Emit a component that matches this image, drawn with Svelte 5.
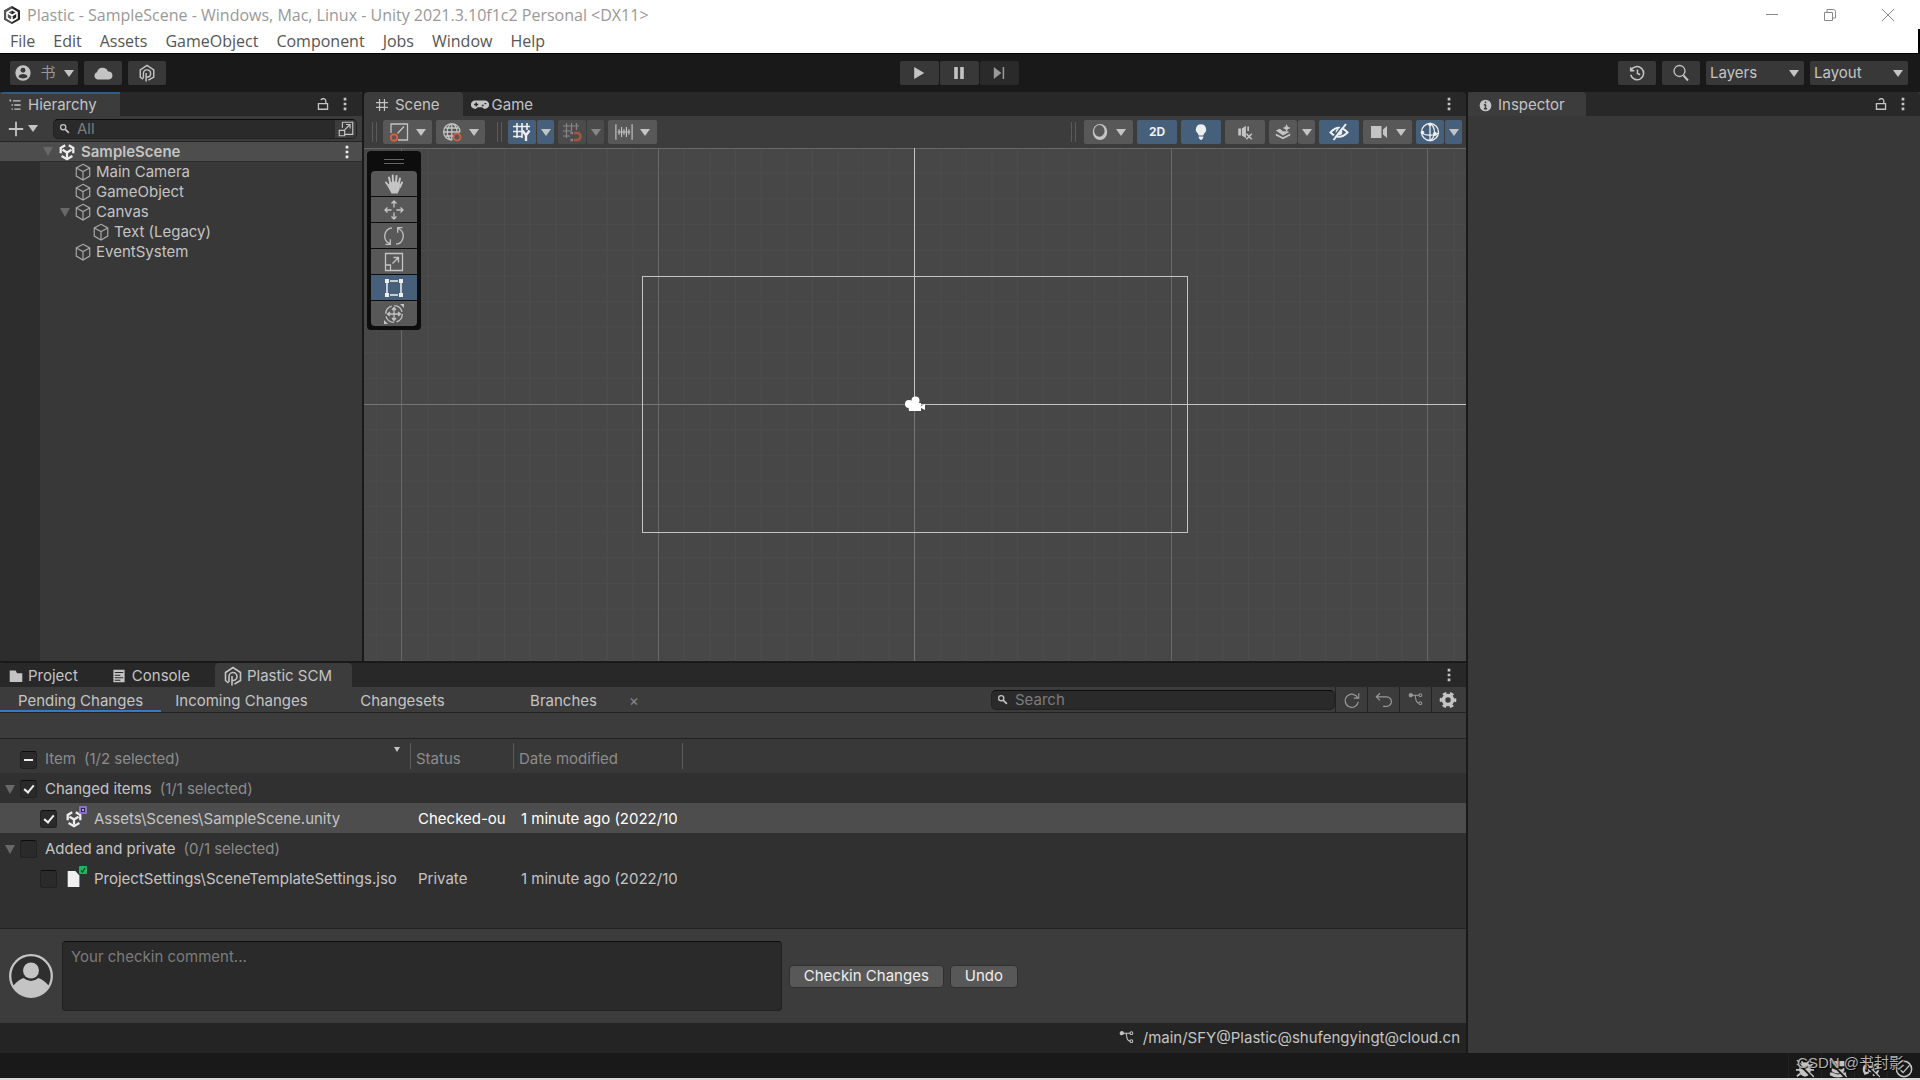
<script lang="ts">
  const menus = ["File", "Edit", "Assets", "GameObject", "Component", "Jobs", "Window", "Help"];

  const objects = [
    { name: "Main Camera", depth: 1, open: false },
    { name: "GameObject", depth: 1, open: false },
    { name: "Canvas", depth: 1, open: true },
    { name: "Text (Legacy)", depth: 2, open: false },
    { name: "EventSystem", depth: 1, open: false },
  ];

  const tools = ["hand", "move", "rotate", "scale", "rect", "transform"];
  let activeTool = $state("rect");

  const views = ["Pending Changes", "Incoming Changes", "Changesets", "Branches"];
  let activeView = $state("Pending Changes");

  let rows = $state([
    { kind: "group", name: "Changed items", count: "(1/1 selected)", checked: true },
    { kind: "file", icon: "unity", name: "Assets\\Scenes\\SampleScene.unity", status: "Checked-ou", date: "1 minute ago (2022/10", checked: true, selected: true },
    { kind: "group", name: "Added and private", count: "(0/1 selected)", checked: false },
    { kind: "file", icon: "doc", name: "ProjectSettings\\SceneTemplateSettings.jso", status: "Private", date: "1 minute ago (2022/10", checked: false, selected: false },
  ]);

  let filter = $state("");
  let search = $state("");
  let comment = $state("");
</script>

{#snippet icon(name, size = 20)}
  <svg class="icon" width={size} height={size} viewBox="0 0 20 20" fill="none" stroke="currentColor" stroke-width="1.3" aria-hidden="true">
    {#if name === "logo"}
      <path d="M10 1l8 4.500v9L10 19l-8-4.500v-9z" fill="#222" stroke="none" />
      <path d="M10 1L2 5.500v9l8 4.500z" fill="#555" stroke="none" />
      <path d="M10 4.500l5 3v5.500l-5 3-5-3V7.500zM5 7.500l5 3 5-3M10 10.500v5" stroke="#fff" stroke-width="1.600" />
    {:else if name === "unity"}
      <path d="M10 10.500L5 7.500M10 10.500l5-3M10 10.500v5.500M8 2.500L3 5.500v6M12 2.500l5 3v6M4 14.500l6 3.500 6-3.500" stroke-width="2.500" />
    {:else if name === "cube"}
      <path d="M10 1.500l7.500 4v9L10 19l-7.500-4.500v-9zM2.500 5.500l7.500 4 7.500-4M10 9.500V19" />
    {:else if name === "account"}
      <circle cx="10" cy="10" r="8.500" fill="currentColor" stroke="none" />
      <circle cx="10" cy="7" r="2.700" fill="#383838" stroke="none" />
      <path d="M5 14.500c0-4.500 10-4.500 10 0-2.500 2-7.500 2-10 0z" fill="#383838" stroke="none" />
    {:else if name === "cloud"}
      <path d="M4.500 16.500a3.800 3.800 0 0 1-.5-7.300A5.800 5.800 0 0 1 15 8.500a4 4 0 0 1 .8 8z" fill="currentColor" stroke="none" />
    {:else if name === "plastic"}
      <path d="M5.500 17L2.500 14.500V6.500L10 1.500l7.500 5v8L11.500 18" stroke-width="1.600" />
      <path d="M9 19.500V10M9 14.500h1.500a4 4 0 1 0-4.500-4v5.500" stroke-width="1.600" />
    {:else if name === "play"}
      <path d="M4 2.500l12.500 7.500L4 17.500z" fill="currentColor" stroke="none" />
    {:else if name === "pause"}
      <path d="M4 2.500h4.500v15H4zM11.500 2.500H16v15h-4.500z" fill="currentColor" stroke="none" />
    {:else if name === "step"}
      <path d="M3.500 2.500L13 10l-9.500 7.500z" fill="currentColor" stroke="none" />
      <path d="M15.500 2.500v15" stroke-width="1.900" />
    {:else if name === "history"}
      <path d="M3.500 7A7.300 7.300 0 1 1 3 12M3 3.500V7.500h4M10.500 6v4.500l3 1.500" stroke-width="1.700" />
    {:else if name === "search"}
      <circle cx="8.500" cy="8" r="5.500" />
      <path d="M12.500 12.500L17 17.500" stroke-width="1.900" />
    {:else if name === "find"}
      <circle cx="7" cy="7" r="4.300" stroke-width="2.200" />
      <path d="M10.500 10.500l6 6" stroke-width="2.800" />
    {:else if name === "list"}
      <path d="M2 3h2M7 4h11M9 10h9M9 16h9M3.500 3v2M5 10h2M5 16h2" stroke-width="1.900" />
    {:else if name === "lock"}
      <path d="M3.500 9.500h13v8h-13zM14 9.500V5.500a3 3 0 0 0-3-3h-1a3 3 0 0 0-3 2" stroke-width="1.900" />
    {:else if name === "dots"}
      <path d="M8.500 3h3v3h-3zM8.500 8.500h3v3h-3zM8.500 14h3v3h-3z" fill="currentColor" stroke="none" />
    {:else if name === "plus"}
      <path d="M10 2v16M2 10h16" stroke-width="2" />
    {:else if name === "popout"}
      <path d="M6 2.500h11.500v13.500H8.500M6 2.500v6M2.500 11.500h6v6h-6zM8.500 11l6-6M10 5h4.500v4.500" />
    {:else if name === "grid"}
      <path d="M6.500 1.500v17M13.500 1.500v17M1.500 6.500h17M1.500 13.500h17" stroke-width="1.700" />
    {:else if name === "gamepad"}
      <path d="M5 5h10a4.600 4.600 0 0 1 1 9.300c-2 .3-3-1.800-4-1.800H8c-1 0-2 2.100-4 1.800A4.600 4.600 0 0 1 5 5z" fill="currentColor" stroke="none" />
      <path d="M3.500 9.500h4.500M5.800 7.300v4.500M12 10.500h2M15 8.500h2" stroke="#282828" stroke-width="1.600" />
    {:else if name === "info"}
      <circle cx="10" cy="10" r="9" fill="currentColor" stroke="none" />
      <path d="M10 4v2.500M10 8.500v6M7.500 9H10M7.500 15h5" stroke="#3c3c3c" stroke-width="2.300" />
    {:else if name === "pivot"}
      <path d="M2 11V2h16.500v16H9M8.500 11.500l6.500-7" />
      <circle cx="5" cy="15.500" r="3.200" stroke="#e0603c" stroke-width="1.700" />
    {:else if name === "globe"}
      <path d="M10 18A8.200 8.200 0 1 1 18 10M9.800 1.500v17M1.500 10H18M3.500 6h13M3.500 14h8M9 2c-5 4-5 12 0 16M11 2c3 2 4 4 4 8" />
      <circle cx="15" cy="15" r="3.500" stroke="#e0603c" stroke-width="1.700" />
    {:else if name === "gridY"}
      <path d="M5 1v15M10 1v15M15 1v7M1 4.500h17M1 9.500h9M1 14.500h9" stroke-width="1.600" />
      <path d="M10.500 8.500l3.500 5 3.500-5M14 13v6" stroke-width="2.400" />
    {:else if name === "snap"}
      <path d="M4.500 1v15M9.500 1v8M14.500 1v7M1 4h16M1 9h8M1 14h7" stroke-width="1.200" />
      <path d="M12 11h3a3.300 3.300 0 0 1 0 7h-3" stroke="#ff6c3e" stroke-width="2.600" />
      <path d="M8.500 11h2.500M8.500 18h2.500" stroke-width="2.600" />
    {:else if name === "ruler"}
      <path d="M1 1.500v17M19 1.500v17M3 10h14M4.500 7v6M7.300 4.500v11M10 7v6M12.700 4.500v11M15.500 7v6" />
    {:else if name === "shading"}
      <ellipse cx="10" cy="10" rx="8" ry="9" fill="currentColor" stroke="none" />
      <ellipse cx="9.300" cy="8.800" rx="5.800" ry="6.500" fill="#585858" stroke="none" />
    {:else if name === "bulb"}
      <path d="M10 1.500a5.700 5.700 0 0 1 3.500 10.200L12.500 14h-5L6.500 11.700A5.700 5.700 0 0 1 10 1.500zM7.500 15h5v1.500l-1.500 2H9l-1.500-2z" fill="currentColor" stroke="none" />
    {:else if name === "mute"}
      <path d="M2.500 6h3v8h-3zM6.500 6L11 3v14l-4.500-3z" fill="currentColor" stroke="none" />
      <path d="M13.500 4v5M11.500 12l6 6M17.500 12l-6 6" stroke-width="1.800" />
    {:else if name === "layers"}
      <path d="M1 8l5-2 4 3h5l3 1-8 4.500zM1 12l9 4.500 9-4.500v2.500L10 19l-9-4.500z" fill="currentColor" stroke="none" />
      <path d="M14.500 0l1.500 3.500L19.500 5 16 6.500 14.500 10 13 6.500 9.500 5 13 3.500z" fill="currentColor" stroke="none" />
    {:else if name === "eye"}
      <path d="M1.500 10.500Q10 1 18.500 10.500Q10 19 1.500 10.500z" stroke-width="2" />
      <circle cx="10" cy="10" r="3.300" fill="currentColor" stroke="none" />
      <path d="M15.500 1L3 17" stroke="#46607c" stroke-width="1.500" />
      <path d="M17 2L4.500 18" stroke-width="2" />
    {:else if name === "video"}
      <path d="M2 4h10.500v12H2zM14 7.500L18 4v12l-4-3.500z" fill="currentColor" stroke="none" />
    {:else if name === "gizmo"}
      <circle cx="10" cy="10" r="8.500" />
      <path d="M10 1v18M10 1c6 5 6 13 0 18M1 11c6 3 12 3 18 0" />
      <circle cx="10" cy="2.500" r="1.800" fill="currentColor" stroke="none" />
      <circle cx="2.500" cy="10.500" r="1.800" fill="currentColor" stroke="none" />
      <circle cx="15" cy="12" r="2" fill="currentColor" stroke="none" />
    {:else if name === "hand"}
      <path d="M6.500 10L5 3.500M9 9L8.700 1.500M12 9l.5-7M14.500 10.500l1.500-6M5.500 13L2 8.500M16 13l2-4.500" stroke-width="2" stroke-linecap="round" />
      <path d="M5.500 9l3-1.500h4l3.500 2.500-.5 5.500-2 4H7.500L3.500 12z" fill="currentColor" stroke="none" />
    {:else if name === "move"}
      <path d="M10 1v6.500M10 12.500V19M1 10h6.500M12.500 10H19M7.500 3.500L10 1l2.500 2.500M7.500 16.500L10 19l2.500-2.500M3.500 7.500L1 10l2.500 2.500M16.500 7.500L19 10l-2.500 2.500" />
    {:else if name === "rotate"}
      <path d="M8 1.800A8.300 8.300 0 0 0 5.500 17.500M12 18.200A8.300 8.300 0 0 0 14.500 2.500M1.500 18.300h4.800v-5M18.500 1.700h-4.800v5" />
    {:else if name === "scale"}
      <path d="M1.500 1.500h17v17h-17zM1.500 13h5v5.500M8.500 11.500l6-6M9.500 5.500h5v5" />
    {:else if name === "rect"}
      <path d="M3 5v10M17 5v10M6 3h8M6 17h8" stroke-width="1.500" />
      <path d="M1 1h4v4H1zM15 1h4v4h-4zM1 15h4v4H1zM15 15h4v4h-4z" fill="currentColor" stroke="none" />
    {:else if name === "transform"}
      <circle cx="10" cy="10" r="8.300" stroke-dasharray="10.500 2.540" />
      <path d="M10 4v12M4 10h12M8 6l2-2.500L12 6M8 14l2 2.500 2-2.500M6 8l-2.500 2L6 12M14 8l2.500 2-2.500 2" />
      <path d="M16 0h4v4zM0 16v4h4z" fill="currentColor" stroke="none" />
    {:else if name === "folder"}
      <path d="M1 2h8.500l2 4H19v12.500H1z" fill="currentColor" stroke="none" />
    {:else if name === "console"}
      <path d="M2 1h16v18H2z" fill="currentColor" stroke="none" />
      <path d="M4 5h12M4 9h8M4 12.500h12M4 16h8" stroke="#282828" stroke-width="1.600" />
    {:else if name === "refresh"}
      <path d="M16.500 8A7.300 7.300 0 1 0 17 12M17.500 2.500V8H12" />
    {:else if name === "undo"}
      <path d="M2 6.500h11a5 5 0 0 1 0 10.500H9M5.500 2.500l-4 4 4 4" />
    {:else if name === "branch"}
      <path d="M4 4h10M9 4c1 7 1 9 5 10" />
      <circle cx="3.500" cy="4" r="2" fill="currentColor" />
      <circle cx="15.500" cy="4" r="1.700" />
      <circle cx="15.500" cy="14" r="1.700" />
    {:else if name === "gear"}
      <circle cx="10" cy="10" r="5" stroke-width="4" />
      <circle cx="10" cy="10" r="7.500" stroke-width="3.500" stroke-dasharray="4 3.854" stroke-dashoffset="2" />
    {:else if name === "doc"}
      <path d="M3 1h8.500l4.500 5v13H3z" fill="#f0f0f0" stroke="none" />
    {:else if name === "bug"}
      <ellipse cx="10" cy="10.500" rx="6.500" ry="8" fill="currentColor" stroke="none" />
      <path d="M1 4l4 3M19 4l-4 3M0 11h20M1 18l4-3M19 18l-4-3M6 1l2 4M14 1l-2 4" stroke-width="2" />
      <path d="M0 1l18 18" stroke="#191919" stroke-width="2.500" />
      <path d="M1 0l19 19" stroke-width="1.300" />
    {:else if name === "cache"}
      <path d="M3 1h14v6H3zM3 8.500q7 5 14 0v4q-7 5-14 0zM1 14h3q6 4 12 0h3v3q-9 5-18 0z" fill="currentColor" stroke="none" />
      <path d="M0 1l18 18" stroke="#191919" stroke-width="2.500" />
      <path d="M1 0l19 19" stroke-width="1.300" />
    {:else if name === "refreshOff"}
      <path d="M3 14A7.500 7.500 0 0 1 8 3M17 6a7.500 7.500 0 0 1-5 11M2 11l1.500 4 4-1.500M18 9l-1.500-4-4 1.500" stroke-width="2.400" />
      <circle cx="10" cy="10" r="3" fill="currentColor" />
      <path d="M0 1l18 18" stroke="#191919" stroke-width="2.500" />
      <path d="M1 0l19 19" stroke-width="1.300" />
    {:else if name === "progress"}
      <circle cx="10" cy="10" r="8.500" stroke-width="1.700" />
      <path d="M5 10l4 4 7-8M7 8l3-2" stroke-width="1.500" />
    {/if}
  </svg>
{/snippet}

{#snippet caret()}<span class="caret"></span>{/snippet}

<div class="editor">
  <header class="titlebar">
    {@render icon("logo", 20)}
    <h1>Plastic - SampleScene - Windows, Mac, Linux - Unity 2021.3.10f1c2 Personal &lt;DX11&gt;</h1>
    <div class="window-buttons">
      <button aria-label="Minimize"><svg width="14" height="14" viewBox="0 0 14 14"><path d="M1 6.500h12" /></svg></button>
      <button aria-label="Restore"><svg width="14" height="14" viewBox="0 0 14 14"><path d="M1.500 4.500h8v8h-8zM4 4V1.500h6.500a2 2 0 0 1 2 2V10H10" /></svg></button>
      <button aria-label="Close"><svg width="14" height="14" viewBox="0 0 14 14"><path d="M1 1l12 12M13 1L1 13" /></svg></button>
    </div>
  </header>

  <nav class="menubar">
    {#each menus as menu}
      <button>{menu}</button>
    {/each}
  </nav>

  <div class="toolbar">
    <div class="side">
      <button class="dark account" aria-label="Account">{@render icon("account", 18)}<span>书</span>{@render caret()}</button>
      <button class="dark" aria-label="Services">{@render icon("cloud", 20)}</button>
      <button class="dark" aria-label="Plastic">{@render icon("plastic", 18)}</button>
    </div>
    <div class="playback">
      <button class="dark" aria-label="Play">{@render icon("play", 16)}</button>
      <button class="dark" aria-label="Pause">{@render icon("pause", 16)}</button>
      <button class="dark off" aria-label="Step">{@render icon("step", 16)}</button>
    </div>
    <div class="side right">
      <button class="dark" aria-label="Undo history">{@render icon("history", 18)}</button>
      <button class="dark" aria-label="Search">{@render icon("search", 20)}</button>
      <label class="dropdown"><select aria-label="Layers"><option>Layers</option></select>{@render caret()}</label>
      <label class="dropdown"><select aria-label="Layout"><option>Layout</option></select>{@render caret()}</label>
    </div>
  </div>

  <main>
    <div class="left">
      <div class="top">
        <section class="hierarchy">
          <div class="tabs">
            <button class="tab active focused">{@render icon("list", 14)}Hierarchy</button>
            <div class="tab-actions">
              <button aria-label="Lock">{@render icon("lock", 14)}</button>
              <button aria-label="Menu">{@render icon("dots", 18)}</button>
            </div>
          </div>
          <div class="filter">
            <button class="add" aria-label="Create">{@render icon("plus", 18)}{@render caret()}</button>
            <div class="field">
              {@render icon("find", 12)}
              <input type="text" placeholder="All" aria-label="Filter objects" bind:value={filter} />
              <button class="open" aria-label="Open search">{@render icon("popout", 18)}</button>
            </div>
          </div>
          <div class="tree">
            <div class="scene-row">
              <span class="caret fold"></span>
              {@render icon("unity", 18)}
              <b>SampleScene</b>
              <button aria-label="Scene menu">{@render icon("dots", 18)}</button>
            </div>
            <ul>
              {#each objects as obj}
                <li class:nested={obj.depth === 2}>
                  <span class="caret fold" class:hidden={!obj.open}></span>
                  {@render icon("cube", 18)}{obj.name}
                </li>
              {/each}
            </ul>
          </div>
        </section>

        <section class="scene">
          <div class="tabs">
            <button class="tab active">{@render icon("grid", 14)}Scene</button>
            <button class="tab game">{@render icon("gamepad", 18)}Game</button>
            <div class="tab-actions">
              <button aria-label="Menu">{@render icon("dots", 18)}</button>
            </div>
          </div>
          <div class="scene-tools">
            <i class="grip"></i>
            <button class="tool wide" aria-label="Pivot">{@render icon("pivot", 20)}{@render caret()}</button>
            <button class="tool wide" aria-label="Global">{@render icon("globe", 20)}{@render caret()}</button>
            <i class="grip second"></i>
            <span class="split">
              <button class="tool on" aria-label="Grid">{@render icon("gridY", 20)}</button>
              <button class="tool arrow on" aria-label="Grid options">{@render caret()}</button>
            </span>
            <span class="split faded">
              <button class="tool" aria-label="Snap">{@render icon("snap", 20)}</button>
              <button class="tool arrow" aria-label="Snap options">{@render caret()}</button>
            </span>
            <button class="tool wide" aria-label="Increment">{@render icon("ruler", 18)}{@render caret()}</button>
            <i class="grip push"></i>
            <button class="tool wide" aria-label="Shading">{@render icon("shading", 18)}{@render caret()}</button>
            <button class="tool mid on">2D</button>
            <button class="tool mid on" aria-label="Lighting">{@render icon("bulb", 18)}</button>
            <button class="tool mid" aria-label="Audio">{@render icon("mute", 18)}</button>
            <span class="split">
              <button class="tool" aria-label="Effects">{@render icon("layers", 16)}</button>
              <button class="tool arrow" aria-label="Effect options">{@render caret()}</button>
            </span>
            <button class="tool mid on" aria-label="Visibility">{@render icon("eye", 20)}</button>
            <button class="tool wide" aria-label="Camera">{@render icon("video", 20)}{@render caret()}</button>
            <span class="split">
              <button class="tool on" aria-label="Gizmos">{@render icon("gizmo", 20)}</button>
              <button class="tool arrow on" aria-label="Gizmo options">{@render caret()}</button>
            </span>
          </div>
          <div class="viewport">
            <svg class="world" viewBox="0 0 1102 513" preserveAspectRatio="xMidYMid slice" aria-hidden="true">
              <defs>
                <pattern id="minor" x="550.500" y="255.500" width="25.650" height="25.650" patternUnits="userSpaceOnUse">
                  <path d="M0 0H26M0 0V26" stroke="#505050" fill="none" />
                </pattern>
              </defs>
              <rect width="1102" height="513" fill="url(#minor)" />
              <path d="M37.500 0v513M294.500 0v513M807.500 0v513M1063.500 0v513M0 .5h1102" stroke="#686868" />
              <path d="M550.500 256v257M0 256.500h550" stroke="#747474" />
              <path d="M550.500 0v256M550 256.500h552" stroke="#c4c4c4" />
              <rect x="278.500" y="128.500" width="545" height="256" fill="none" stroke="#c4c4c4" />
              <g fill="#fff">
                <circle cx="545" cy="256" r="4" />
                <circle cx="551.500" cy="252.500" r="4" />
                <path d="M544 255h13v3l4-2v6l-4-2v3h-12z" />
              </g>
            </svg>
            <div class="palette">
              <i></i>
              {#each tools as tool}
                <button class:on={activeTool === tool} aria-label={tool} onclick={() => (activeTool = tool)}>
                  {@render icon(tool, 20)}
                </button>
              {/each}
            </div>
          </div>
        </section>
      </div>

      <section class="plastic">
        <div class="tabs">
          <button class="tab project">{@render icon("folder", 14)}Project</button>
          <button class="tab console">{@render icon("console", 14)}Console</button>
          <button class="tab active scm">{@render icon("plastic", 20)}Plastic SCM</button>
          <div class="tab-actions">
            <button aria-label="Menu">{@render icon("dots", 18)}</button>
          </div>
        </div>
        <div class="views">
          {#each views as view}
            <button class="view" class:current={activeView === view} onclick={() => (activeView = view)}>
              {view}{#if view === "Branches"}<span class="close">×</span>{/if}
            </button>
          {/each}
          <div class="field search">
            {@render icon("find", 12)}
            <input type="text" placeholder="Search" aria-label="Search changes" bind:value={search} />
          </div>
          <button class="action" aria-label="Refresh">{@render icon("refresh", 18)}</button>
          <button class="action" aria-label="Undo changes">{@render icon("undo", 18)}</button>
          <button class="action" aria-label="Branch">{@render icon("branch", 16)}</button>
          <button class="action bright" aria-label="Settings">{@render icon("gear", 18)}</button>
        </div>
        <div class="spacer"></div>
        <div class="changes">
          <table>
            <colgroup><col class="c-item" /><col class="c-status" /><col class="c-date" /><col /></colgroup>
            <thead>
              <tr>
                <th>
                  <div class="cell">
                    <input type="checkbox" class="mixed" aria-label="Select all" />
                    <span>Item</span><span class="count">(1/2 selected)</span>
                    <span class="caret sort"></span>
                  </div>
                </th>
                <th><div class="cell">Status</div></th>
                <th><div class="cell">Date modified</div></th>
                <th></th>
              </tr>
            </thead>
            <tbody>
              {#each rows as row}
                {#if row.kind === "group"}
                  <tr>
                    <td colspan="4">
                      <div class="cell group">
                        <span class="caret fold"></span>
                        <input type="checkbox" aria-label={row.name} bind:checked={row.checked} />
                        <span>{row.name}</span><span class="count">{row.count}</span>
                      </div>
                    </td>
                  </tr>
                {:else}
                  <tr class:selected={row.selected}>
                    <td>
                      <div class="cell file">
                        <input type="checkbox" aria-label={row.name} bind:checked={row.checked} />
                        <span class="file-icon">
                          {@render icon(row.icon, 18)}
                          <svg class="badge" width="8" height="8" viewBox="0 0 8 8" aria-hidden="true">
                            {#if row.icon === "doc"}
                              <rect width="8" height="8" rx="1" fill="#17b862" />
                              <path d="M2 4.500l1.500 1.500L6 2" fill="none" stroke="#0b4024" stroke-width="1.3" />
                            {:else}
                              <rect width="8" height="8" rx="1" fill="#8a70d0" />
                              <rect x="2" y="2" width="4" height="4" fill="#30264c" />
                              <rect x="3" y="3" width="2" height="2" fill="#b09aec" />
                            {/if}
                          </svg>
                        </span>
                        <span class="clip">{row.name}</span>
                      </div>
                    </td>
                    <td class="value"><div class="clip">{row.status}</div></td>
                    <td class="value"><div class="clip">{row.date}</div></td>
                    <td></td>
                  </tr>
                {/if}
              {/each}
            </tbody>
          </table>
        </div>
        <div class="checkin">
          <svg width="44" height="44" viewBox="0 0 44 44" aria-hidden="true">
            <circle cx="22" cy="22" r="20.800" fill="#2e2e2e" stroke="#c4c4c4" stroke-width="2.300" />
            <circle cx="22" cy="16.500" r="8" fill="#c4c4c4" />
            <path d="M4 32q5-6 10.500-8 7.500 6 15 0Q35 26 40 32a20.500 20.500 0 0 1-36 0z" fill="#c4c4c4" />
          </svg>
          <textarea placeholder="Your checkin comment..." aria-label="Checkin comment" bind:value={comment}></textarea>
          <button>Checkin Changes</button>
          <button>Undo</button>
        </div>
        <footer class="workspace">{@render icon("branch", 16)}<span>/main/SFY@Plastic@shufengyingt@cloud.cn</span></footer>
      </section>
    </div>

    <aside class="inspector">
      <div class="tabs">
        <button class="tab active">{@render icon("info", 13)}Inspector</button>
        <div class="tab-actions">
          <button aria-label="Lock">{@render icon("lock", 14)}</button>
          <button aria-label="Menu">{@render icon("dots", 18)}</button>
        </div>
      </div>
    </aside>
  </main>

  <footer class="statusbar">
    <button aria-label="Debugger">{@render icon("bug", 18)}</button>
    <button aria-label="Cache server">{@render icon("cache", 18)}</button>
    <button aria-label="Auto refresh">{@render icon("refreshOff", 18)}</button>
    <button aria-label="Progress">{@render icon("progress", 18)}</button>
    <span class="watermark">CSDN @书封影</span>
  </footer>
</div>

<style>
  :global(body) {
    margin: 0;
    background: #191919;
  }

  .editor {
    display: flex;
    flex-direction: column;
    min-height: 100vh;
    box-sizing: border-box;
    border-bottom: 2px solid #dcdadb;
    background: #191919;
    color: #c4c4c4;
    font-family: Inter, "Noto Sans CJK SC", sans-serif;
    font-size: 15px;
    line-height: 20px;
  }

  button, input, textarea, select {
    font: inherit;
    color: inherit;
    box-sizing: border-box;
  }

  button {
    display: flex;
    align-items: center;
    justify-content: center;
    padding: 0;
    border: 0;
    background: none;
    white-space: nowrap;
  }

  .icon {
    flex: none;
    display: block;
  }

  .caret {
    flex: none;
    border: 5px solid transparent;
    border-top: 7px solid #c4c4c4;
    border-bottom: 0;
  }

  .caret.fold {
    border-top: 9px solid #686868;
  }

  .hidden {
    visibility: hidden;
  }

  /* window chrome */
  .titlebar {
    display: flex;
    align-items: center;
    gap: 5px;
    height: 29px;
    padding-left: 2px;
    background: #fff;
    color: #999;
    font-family: "Open Sans", "Noto Sans", sans-serif;
  }

  .titlebar h1 {
    margin: 0;
    font-size: 16px;
    font-weight: 400;
  }

  .window-buttons {
    display: flex;
    margin-left: auto;
    padding-right: 3px;
  }

  .window-buttons button {
    width: 58px;
    height: 29px;
  }

  .window-buttons svg {
    fill: none;
    stroke: #888;
  }

  .menubar {
    display: flex;
    gap: 18px;
    height: 24px;
    padding-left: 10px;
    border-right: 2px solid #000;
    background: #fff;
    color: #555;
    font-family: "Open Sans", "Noto Sans", sans-serif;
    font-size: 16px;
  }

  .toolbar {
    display: flex;
    align-items: center;
    height: 39px;
    padding: 0 12px 0 10px;
    box-sizing: border-box;
    border-top: 1px solid #000;
  }

  .side {
    display: flex;
    flex: 1;
    gap: 6px;
  }

  .side.right {
    justify-content: flex-end;
  }

  .dark {
    width: 38px;
    height: 24px;
    border-radius: 2px;
    background: #383838;
  }

  .account {
    width: 68px;
    gap: 8px;
  }

  .account span:first-of-type {
    color: #999;
  }

  .playback {
    display: flex;
    gap: 1px;
  }

  .playback .dark {
    width: 39px;
  }

  .playback .off {
    background: #2a2a2a;
    color: #999;
  }

  .dropdown {
    display: flex;
    align-items: center;
    width: 98px;
    height: 24px;
    padding-right: 5px;
    box-sizing: border-box;
    border-radius: 2px;
    background: #383838;
  }

  .dropdown select {
    flex: 1;
    min-width: 0;
    padding: 0 0 0 4px;
    border: 0;
    background: none;
    appearance: none;
  }

  /* docks */
  main {
    display: grid;
    flex: 1;
    grid-template-columns: minmax(0, 1466fr) minmax(0, 452fr);
    gap: 2px;
  }

  .left {
    display: flex;
    flex-direction: column;
    gap: 2px;
    min-width: 0;
  }

  .top {
    display: grid;
    flex: 1;
    grid-template-columns: minmax(0, 362fr) minmax(0, 1102fr);
    gap: 2px;
  }

  .tabs {
    display: flex;
    height: 24px;
    border-radius: 4px 4px 0 0;
    background: #282828;
    overflow: hidden;
  }

  .tab {
    gap: 6px;
    padding: 0 23px 0 11px;
    border-top: 2px solid transparent;
    border-radius: 4px 4px 0 0;
  }

  .tab.active {
    background: #3c3c3c;
  }

  .tab.focused {
    padding-left: 8px;
    border-top-color: #2c5d87;
    border-radius: 0;
  }

  .tab.game {
    gap: 3px;
    padding-left: 8px;
  }

  .tab-actions {
    display: flex;
    align-items: center;
    gap: 6px;
    margin-left: auto;
    padding-right: 8px;
  }

  .hierarchy {
    display: flex;
    flex-direction: column;
    background: #383838;
  }

  .filter {
    display: flex;
    align-items: center;
    gap: 15px;
    height: 26px;
    padding: 0 5px 0 7px;
    box-sizing: border-box;
    border-bottom: 1px solid #232323;
    background: #3c3c3c;
  }

  .add {
    gap: 3px;
  }

  .field {
    display: flex;
    flex: 1;
    align-items: center;
    height: 20px;
    box-sizing: border-box;
    padding-left: 5px;
    border: 1px solid #212121;
    border-top-color: #0d0d0d;
    border-radius: 5px;
    background: #2a2a2a;
  }

  .field input {
    flex: 1;
    min-width: 0;
    padding: 0 6px;
    border: 0;
    outline: 0;
    background: none;
  }

  .field input::placeholder,
  .checkin textarea::placeholder {
    color: #7c7c7c;
    opacity: 1;
  }

  .open {
    width: 21px;
    height: 18px;
    border-radius: 0 4px 4px 0;
    background: #3c3c3c;
  }

  .tree {
    flex: 1;
    background: linear-gradient(to right, #2d2d2d 40px, #383838 40px);
  }

  .scene-row {
    display: flex;
    align-items: center;
    gap: 5px;
    height: 19px;
    padding: 0 6px 0 43px;
    border-bottom: 1px solid #2d2d2d;
    background: #4d4d4d;
  }

  .scene-row .icon {
    color: #eee;
  }

  .scene-row b {
    font-weight: 600;
  }

  .scene-row button {
    margin-left: auto;
  }

  .tree ul {
    margin: 0;
    padding: 0;
    list-style: none;
  }

  .tree li {
    display: flex;
    align-items: center;
    gap: 4px;
    height: 20px;
    padding-left: 60px;
  }

  .tree li .icon {
    color: #a8a8a8;
  }

  .tree li.nested {
    padding-left: 78px;
  }

  .scene {
    display: flex;
    flex-direction: column;
    min-width: 0;
  }

  .scene-tools {
    display: flex;
    align-items: center;
    gap: 4px;
    height: 32px;
    padding: 0 4px 0 8px;
    background: #3c3c3c;
  }

  .grip {
    width: 3px;
    height: 20px;
    margin-right: 2px;
    border: solid #5a5a5a;
    border-width: 0 1px;
  }

  .grip.second {
    margin-left: 8px;
  }

  .grip.push {
    margin-left: auto;
    margin-right: 4px;
  }

  .tool {
    width: 28px;
    height: 24px;
    border-radius: 2px;
    background: #585858;
  }

  .tool.wide {
    width: 49px;
    gap: 7px;
  }

  .tool.mid {
    width: 40px;
    font-size: 12px;
    font-weight: 700;
  }

  .tool.arrow {
    width: 17px;
  }

  .tool.on {
    background: #46607c;
    color: #eee;
  }

  .split {
    display: flex;
    gap: 1px;
  }

  .faded {
    opacity: 0.55;
  }

  .viewport {
    position: relative;
    flex: 1;
    min-height: 513px;
    background: #474747;
    overflow: hidden;
  }

  .world {
    position: absolute;
    inset: 0;
    width: 100%;
    height: 100%;
  }

  .palette {
    position: absolute;
    top: 3px;
    left: 3px;
    display: flex;
    flex-direction: column;
    gap: 1px;
    padding: 0 4px 4px;
    border-radius: 4px;
    background: #0d0d0d;
  }

  .palette i {
    width: 20px;
    height: 3px;
    margin: 8px auto 6px;
    border: solid #666;
    border-width: 1px 0;
  }

  .palette button {
    width: 46px;
    height: 25px;
    background: #585858;
  }

  .palette button:first-of-type {
    border-radius: 4px 4px 0 0;
  }

  .palette button:last-of-type {
    border-radius: 0 0 4px 4px;
  }

  .palette button.on {
    background: #46607c;
    color: #eee;
  }

  /* version control */
  .plastic {
    background: #303030;
  }

  .tab.project {
    gap: 5px;
    padding: 0 34px 0 9px;
  }

  .tab.console {
    padding: 0 25px 0 0;
  }

  .tab.scm {
    gap: 4px;
    padding: 0 20px 0 8px;
  }

  .views {
    display: flex;
    align-items: center;
    height: 26px;
    padding-right: 3px;
    box-sizing: border-box;
    border-bottom: 1px solid #232323;
    background: #3c3c3c;
  }

  .view {
    position: relative;
    width: 161px;
    height: 25px;
    border-top: 4px solid transparent;
    border-bottom: 2px solid transparent;
  }

  .view.current {
    border-bottom-color: #3a79bb;
  }

  .close {
    position: absolute;
    right: 5px;
    color: #888;
  }

  .field.search {
    flex: none;
    width: 344px;
    margin-left: auto;
  }

  .action {
    width: 32px;
    height: 25px;
    border-left: 1px solid #232323;
    color: #999;
  }

  .action.bright {
    color: #c4c4c4;
  }

  .spacer {
    height: 25px;
    border-bottom: 1px solid #232323;
    background: #3c3c3c;
  }

  .changes {
    min-height: 189px;
    border-bottom: 1px solid #232323;
  }

  table {
    width: 100%;
    border-collapse: collapse;
    table-layout: fixed;
  }

  .c-item {
    width: 411px;
  }

  .c-status {
    width: 103px;
  }

  .c-date {
    width: 169px;
  }

  thead {
    background: #383838;
    color: #8c8c8c;
  }

  th {
    height: 34px;
    padding: 0;
    font-weight: 400;
    text-align: left;
  }

  th .cell {
    align-items: flex-end;
    height: 26px;
    padding-left: 5px;
    box-sizing: border-box;
    border-right: 1px solid #5a5a5a;
  }

  th:first-child .cell {
    padding-left: 20px;
  }

  td {
    height: 28px;
    padding: 2px 0 0;
  }

  .cell {
    display: flex;
    align-items: center;
    gap: 8px;
  }

  .cell.group {
    padding-left: 5px;
  }

  .cell.group .caret {
    margin-right: -3px;
  }

  .cell.file {
    padding: 0 4px 0 40px;
  }

  .count {
    color: #8c8c8c;
  }

  .sort {
    align-self: flex-start;
    margin: 4px 10px 0 auto;
    border-width: 5px 3px 0;
  }

  .selected {
    background: #4d4d4d;
  }

  .selected .value {
    color: #fff;
  }

  td.value {
    padding: 2px 6px 0 7px;
  }

  .clip {
    overflow: hidden;
    white-space: nowrap;
  }

  .file-icon {
    position: relative;
    color: #eee;
    margin-right: 3px;
  }

  .badge {
    position: absolute;
    top: -4px;
    right: -4px;
  }

  input[type="checkbox"] {
    flex: none;
    display: grid;
    place-items: center;
    width: 17px;
    height: 18px;
    margin: 0;
    border: 1px solid #212121;
    border-top-color: #0d0d0d;
    border-radius: 3px;
    background: #2a2a2a;
    appearance: none;
  }

  input[type="checkbox"]:checked::before {
    content: "";
    width: 4px;
    height: 8px;
    margin-bottom: 3px;
    border: solid #eee;
    border-width: 0 2px 2px 0;
    transform: rotate(40deg);
  }

  input.mixed::before {
    content: "";
    width: 9px;
    height: 2px;
    background: #eee;
  }

  .checkin {
    display: flex;
    align-items: center;
    gap: 6px;
    height: 94px;
    padding-left: 9px;
    background: #3c3c3c;
  }

  .checkin textarea {
    width: 49.4%;
    height: 70px;
    margin: 0 1px 0 3px;
    padding: 5px 8px;
    border: 1px solid #212121;
    border-top-color: #0d0d0d;
    border-radius: 4px;
    background: #2a2a2a;
    resize: none;
    outline: 0;
  }

  .checkin button {
    height: 23px;
    padding: 0 14px;
    border: 1px solid #303030;
    border-radius: 4px;
    background: #585858;
    color: #eee;
  }

  .workspace {
    display: flex;
    align-items: center;
    justify-content: flex-end;
    gap: 8px;
    height: 30px;
    padding-right: 6px;
    background: #242424;
  }

  .inspector {
    background: #383838;
  }

  .inspector .tab {
    padding-right: 21px;
  }

  .statusbar {
    position: relative;
    display: flex;
    justify-content: flex-end;
    height: 25px;
  }

  .statusbar button {
    align-items: flex-end;
    width: 33px;
    border-left: 1px solid #232323;
  }

  .watermark {
    position: absolute;
    right: 16px;
    top: 0;
    color: #b0b0b0;
    font-family: "Liberation Sans", "Noto Sans CJK SC", sans-serif;
    text-shadow: 1px 1px 1px #000;
  }
</style>
